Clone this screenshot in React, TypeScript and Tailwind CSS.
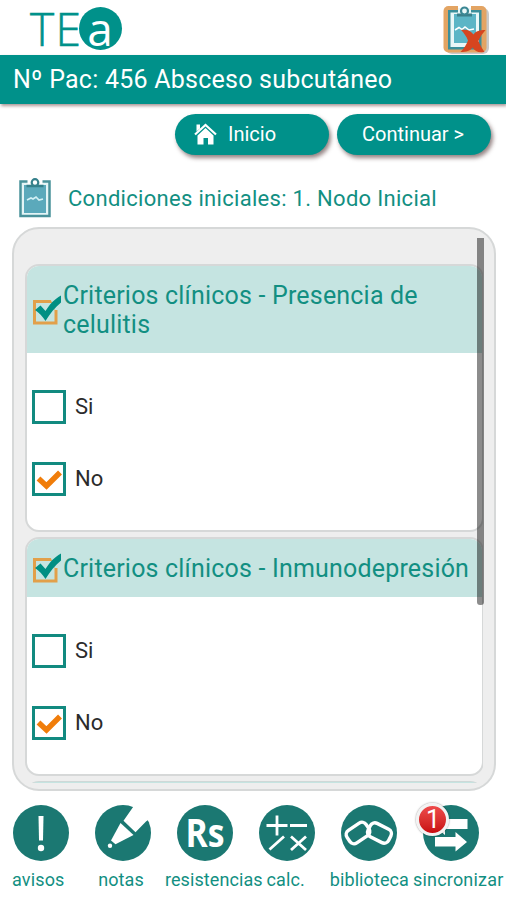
import type { ReactNode } from "react";

type Option = { label: string; checked: boolean };

const OPTIONS: Option[] = [
  { label: "Si", checked: false },
  { label: "No", checked: true },
];

export default function App() {
  return (
    <div className="flex h-[900px] w-[506px] flex-col overflow-hidden bg-white font-['Roboto',sans-serif]">
      <header className="flex h-[55px] shrink-0 items-start justify-between pl-[30px] pr-[17px]">
        <Logo />
        <CloseCaseIcon />
      </header>

      <h1 className="flex h-[49px] shrink-0 items-center whitespace-nowrap bg-[#00918a] pl-[13px] pt-px text-[25px] tracking-[0.24px] text-white shadow-[1px_2px_3px_rgba(90,50,50,0.5)]">
        Nº Pac: 456 Absceso subcutáneo
      </h1>

      <div className="flex shrink-0 justify-end gap-2 pr-[15px] pt-[10px]">
        <button className="flex h-[41px] w-[154px] items-center rounded-full bg-[#00918a] pb-px pl-[19px] text-[20px] text-white shadow-[2px_3px_4px_rgba(60,30,30,0.55)]">
          <HomeIcon />
          <span className="ml-[11px]">Inicio</span>
        </button>
        <button className="flex h-[41px] w-[154px] items-center whitespace-nowrap rounded-full bg-[#00918a] pb-px pl-[25px] text-[20px] text-white shadow-[2px_3px_4px_rgba(60,30,30,0.55)]">
          Continuar &gt;
        </button>
      </div>

      <div className="mt-[22px] flex h-[42px] shrink-0 items-center pl-[19px]">
        <ClipboardIcon />
        <h2 className="ml-[17px] whitespace-nowrap text-[22px] tracking-[0.3px] text-[#128f82]">
          Condiciones iniciales: 1. Nodo Inicial
        </h2>
      </div>

      {/* Panel con scroll */}
      <main className="relative ml-[12px] mt-[8px] h-[564px] w-[484px] shrink-0 rounded-[27px] border-2 border-[#d6d8d8] bg-[#eeeeee] px-[11px] pb-[6px] pt-[35px]">
        <div className="flex h-full flex-col gap-[5px] overflow-hidden">
          <Card title="Criterios clínicos - Presencia de celulitis" tall />
          <Card title="Criterios clínicos - Inmunodepresión" />
          <div className="h-10 w-[459px] shrink-0 rounded-t-[14px] border-t border-[#cfd8d7] bg-[#c5e4e1]" />
        </div>
        <div className="absolute right-[10px] top-[9px] h-[367px] w-[7px] rounded-b-[3px] bg-black/45" />
      </main>

      <nav className="mt-[14px] flex shrink-0">
        <NavItem label="avisos" className="pl-[12px] tracking-[0.15px]">
          <path d="M25.500 11h5l-.5 24.500h-4z" fill="white" />
          <circle cx="28" cy="43" r="3.200" fill="white" />
        </NavItem>
        <NavItem label="notas" className="pl-[16px] tracking-[0.1px]">
          <path d="M39.500 0 28.500 15.800 40.500 27.300 51 16.500 57 12V0z" fill="white" />
          <path d="M25.500 18 38.500 30 20.500 39.300 16 35.500z" fill="white" />
          <circle cx="15" cy="40.800" r="2.200" fill="white" />
        </NavItem>
        <NavItem label="resistencias" className="pl-[0.5px] tracking-[0.1px]">
          <text
            x="28"
            y="41.500"
            textAnchor="middle"
            fill="white"
            className="font-['Open_Sans',sans-serif] text-[39px] font-bold"
            textLength="39"
            lengthAdjust="spacingAndGlyphs"
          >
            Rs
          </text>
        </NavItem>
        <NavItem label="calc." className="pl-[20px] tracking-[0.1px]">
          <path
            d="M7.500 20.500h21M18 10.500v20M31 20.500h17M10.500 44.500l14.500-13M32 31.500l15 13.500M47 31.500 32 45"
            stroke="white"
            strokeWidth="2.800"
            fill="none"
          />
        </NavItem>
        <NavItem label="biblioteca" className="pl-[1px] tracking-[0.1px]">
          <g fill="none" stroke="white" strokeWidth="3.500">
            <rect x="5.500" y="20.500" width="23" height="15" rx="5" transform="rotate(-34 17 28)" />
            <rect x="27" y="20.500" width="23" height="15" rx="5" transform="rotate(27 38.500 28)" />
          </g>
        </NavItem>
        <NavItem label="sincronizar" className="pl-[2px] tracking-[0.2px]" badge={1}>
          <path d="M44.500 14H22V9L10 19.500 22 30v-6h22.500z" fill="white" />
          <path d="M12 32h20.500v-5L44 37 32.500 46.500v-5H12z" fill="white" />
        </NavItem>
      </nav>
    </div>
  );
}

function Card({ title, tall }: { title: string; tall?: boolean }) {
  return (
    <section className="w-[459px] shrink-0 overflow-hidden rounded-[14px] border-2 border-[#d6d8d8] bg-white">
      <div
        className={`flex items-center bg-[#c5e4e1] pl-[5px] ${
          tall ? "h-[87px]" : "h-[58px]"
        }`}
      >
        <TitleCheckIcon />
        <h3 className="ml-px text-[25px] leading-[29px] tracking-[0.19px] text-[#128f82]">
          {title}
        </h3>
      </div>
      <ul className="flex h-[177px] flex-col gap-[38px] pl-[5px] pt-[37px]">
        {OPTIONS.map((o) => (
          <li key={o.label} className="flex h-[34px] items-center">
            <Checkbox checked={o.checked} />
            <span className="ml-[9px] text-[22px] leading-none text-[#2b2b2b]">{o.label}</span>
          </li>
        ))}
      </ul>
    </section>
  );
}

function Checkbox({ checked }: { checked: boolean }) {
  return (
    <span className="flex size-[34px] items-center justify-center border-[3px] border-[#128a80] bg-white">
      {checked && (
        <svg width="28" height="28" viewBox="0 0 28 28" className="shrink-0">
          <path d="m3.500 13.500 8 7.500L25 7.500" fill="none" stroke="#f07d0a" strokeWidth="5.500" />
        </svg>
      )}
    </span>
  );
}

function NavItem({
  label,
  className,
  badge,
  children,
}: {
  label: string;
  className: string;
  badge?: number;
  children: ReactNode;
}) {
  return (
    <div className="w-[82.2px] shrink-0">
      <div className="relative ml-[12.5px] size-[56px]">
        <svg width="56" height="56" viewBox="0 0 56 56">
          <circle cx="28" cy="28" r="28" fill="#1b7872" />
          {children}
        </svg>
        {badge && (
          <span className="absolute -left-[7px] -top-[2px] flex size-[33px] items-center justify-center rounded-full border-[3px] border-[#f3f3f3] bg-linear-to-b from-[#ee4a4a] to-[#c80a10] text-[25px] leading-none text-white shadow-[0_0_2px_rgba(0,0,0,0.5)]">
            {badge}
          </span>
        )}
      </div>
      <p className={`mt-[7px] whitespace-nowrap text-[18px] leading-[24px] text-[#128f82] ${className}`}>
        {label}
      </p>
    </div>
  );
}

function Logo() {
  return (
    <div className="flex h-[57px] items-center font-['Open_Sans',sans-serif] text-[46px] leading-[57px]">
      <span className="w-[48.5px] whitespace-nowrap font-light tracking-[1.5px] text-[#00918a] [-webkit-text-stroke:0.6px_#00918a]">
        TE
      </span>
      <span className="flex size-[43px] items-center justify-center rounded-full bg-[#00918a] text-white">
        a
      </span>
    </div>
  );
}

function CloseCaseIcon() {
  return (
    <svg width="46" height="50" viewBox="0 0 46 50" className="mt-[5px]">
      <rect x="3" y="3" width="43" height="46" rx="6" fill="#888" opacity="0.45" />
      <rect x="0.500" y="1" width="43" height="46.500" rx="5" fill="#e3a463" />
      <path d="M15 0h13v7H15z" fill="white" />
      <path d="M5 5h33.500v39.500H5z" fill="#3b8f9b" />
      <path d="M7.500 7.500h28.500v34.500H7.500z" fill="#e9f7f8" />
      <path d="M11 9h22v29H11z" fill="#5cb5c6" />
      <path d="M15 3h13v5H15z" fill="#e9f7f8" />
      <path d="M14 10h15" stroke="#3b7f8a" strokeWidth="3" />
      <circle cx="21.500" cy="6" r="3.500" fill="#e9f7f8" stroke="#3b8794" strokeWidth="2.200" />
      <path d="m12 25 4-2.500 3 2 3-2.500 4 3 5-1" fill="none" stroke="white" strokeWidth="1.500" />
      <path
        d="M18 25c5.500-1 9.500 0 12.500 4.500 2.500-3.500 6-4.500 12-4.500-3 3.500-5.500 7-7 11 1.500 4 3.500 7.500 6 11-6 1-9.500-.5-12-4.500-2.500 3.500-6 4.500-12 4.500 3.500-3.500 6-7.500 7.500-11.500-1.500-4-4-7.500-7-10.500z"
        fill="#d6451f"
      />
    </svg>
  );
}

function ClipboardIcon() {
  return (
    <svg width="32" height="40" viewBox="0 0 32 40">
      <path d="M9 3.500H1.500V38h29V3.500H23" fill="#e4f4f6" stroke="#4a929b" strokeWidth="2.500" />
      <path d="M5 7h22v28H5z" fill="#5ba9bb" />
      <path d="M8.500 0h15v6.500h-15z" fill="white" />
      <path d="M7.500 8h17" stroke="#35808b" strokeWidth="2.500" />
      <circle cx="16" cy="4.500" r="3.300" fill="white" stroke="#35808b" strokeWidth="2.200" />
      <path d="m8 22 4-2 2 1 3-2 3 3 4-1" fill="none" stroke="#d3f0f5" strokeWidth="1.700" />
    </svg>
  );
}

function HomeIcon() {
  return (
    <svg width="23" height="22" viewBox="0 0 23 22">
      <path d="m1 11.500 10.500-9.500L22 11.500" fill="none" stroke="white" strokeWidth="2.200" />
      <path d="M2.500 1.500h3.500v4L2.500 8.500z" fill="white" />
      <path d="M3.500 12.500 11.500 5l8 7.500V21.500h-5.500V15H9.500v6.500h-6z" fill="white" />
    </svg>
  );
}

function TitleCheckIcon() {
  return (
    <svg width="30" height="32" viewBox="0 0 30 32" className="shrink-0">
      <path d="M2.500 7.500H24v21.500H2.500z" fill="none" stroke="#e2a04a" strokeWidth="3" />
      <path d="M18 4h11v12h-6z" fill="#c5e4e1" />
      <path
        d="M3 16 8.500 11.500l5 5.500C17.500 10.500 22 5.500 29 1.500v7C23 13.500 18 19.500 13.500 27 10.500 22.500 7 18.500 3 16z"
        fill="#008f83"
      />
    </svg>
  );
}
